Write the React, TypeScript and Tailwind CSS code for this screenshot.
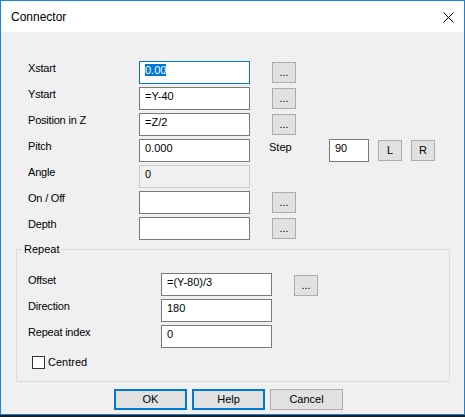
import React from "react";

const font = { fontFamily: '"Liberation Sans", Arial, sans-serif' };

function Field({
  value,
  w = "w-[111px]",
  focused = false,
  disabled = false,
}: {
  value?: string;
  w?: string;
  focused?: boolean;
  disabled?: boolean;
}) {
  const border = focused
    ? "border-[#0078d7]"
    : disabled
    ? "border-[#cccccc]"
    : "border-[#7a7a7a]";
  const bg = disabled ? "bg-[#f0f0f0]" : "bg-white";
  return (
    <div
      className={`${w} h-[23px] shrink-0 border ${border} ${bg} pl-[5px] pt-[2px] text-[11px] leading-[13px] text-black`}
    >
      {focused ? (
        <span className="bg-[#0078d7] text-white">{value}</span>
      ) : (
        value
      )}
    </div>
  );
}

function SmallBtn({ label, mt = "mt-[1px]" }: { label: string; mt?: string }) {
  return (
    <div
      className={`w-[24px] h-[21px] ${mt} shrink-0 border border-[#adadad] bg-[#e1e1e1] flex items-center justify-center text-[11px] leading-[13px] text-black`}
    >
      {label}
    </div>
  );
}

function Label({ text, w }: { text: string; w: string }) {
  return (
    <div className={`${w} shrink-0 pt-[1px] text-[11px] leading-[13px] tracking-[-0.2px] text-black`}>
      {text}
    </div>
  );
}

function Row({
  label,
  value,
  btn = true,
  focused,
  disabled,
}: {
  label: string;
  value?: string;
  btn?: boolean;
  focused?: boolean;
  disabled?: boolean;
}) {
  return (
    <div className="flex h-[23px]">
      <Label text={label} w="w-[111px]" />
      <Field value={value} focused={focused} disabled={disabled} />
      {btn && (
        <div className="ml-[22px]">
          <SmallBtn label="..." />
        </div>
      )}
    </div>
  );
}

function GroupRow({ label, value, btn }: { label: string; value: string; btn?: boolean }) {
  return (
    <div className="flex h-[23px]">
      <Label text={label} w="w-[133px]" />
      <Field value={value} />
      {btn && (
        <div className="ml-[22px]">
          <SmallBtn label="..." mt="mt-[2px]" />
        </div>
      )}
    </div>
  );
}

function DlgButton({ label, def }: { label: string; def?: boolean }) {
  return (
    <div
      className={`w-[73px] h-[21px] ${
        def ? "border-2 border-[#0078d7]" : "border border-[#adadad]"
      } bg-[#e1e1e1] flex items-center justify-center text-[11px] leading-[13px] text-black`}
    >
      {label}
    </div>
  );
}

export default function App() {
  return (
    <div className="w-[465px] h-[417px] bg-[#1c1c1c]" style={font}>
      <div className="w-[465px] h-[415px] border border-[#1883d7] bg-[#f0f0f0] flex flex-col">
        {/* Title bar */}
        <div className="h-[31px] bg-white flex items-center justify-between pl-[10px] pr-[10px] shrink-0">
          <span className="text-[12px] leading-[14px] text-black">Connector</span>
          <svg width="11" height="11" viewBox="0 0 11 11" className="mt-[1px]">
            <path d="M0.5 0.5 L10.5 10.5 M10.5 0.5 L0.5 10.5" stroke="#000" strokeWidth="1" />
          </svg>
        </div>

        {/* Content */}
        <div className="pt-[29px] flex flex-col">
          <div className="pl-[27px] flex flex-col gap-[3px]">
            <Row label="Xstart" value="0.00" focused />
            <Row label="Ystart" value="=Y-40" />
            <Row label="Position in Z" value="=Z/2" />
            <div className="flex h-[23px]">
              <Label text="Pitch" w="w-[111px]" />
              <Field value="0.000" />
              <div className="ml-[19px] w-[60px] pt-[2px] text-[11px] leading-[13px] text-black">Step</div>
              <Field value="90" w="w-[40px]" />
              <div className="ml-[9px]">
                <SmallBtn label="L" />
              </div>
              <div className="ml-[9px]">
                <SmallBtn label="R" />
              </div>
            </div>
            <Row label="Angle" value="0" btn={false} disabled />
            <Row label="On / Off" value="" />
            <Row label="Depth" value="" />
          </div>

          {/* Repeat group */}
          <div className="ml-[15px] mt-[9px] w-[434px] border border-[#dcdcdc] relative pt-[23px] pl-[11px] pb-[12px]">
            <span className="absolute top-[-7px] left-[5px] px-[2px] bg-[#f0f0f0] text-[11px] leading-[13px] text-black">
              Repeat
            </span>
            <div className="flex flex-col gap-[3px]">
              <GroupRow label="Offset" value="=(Y-80)/3" btn />
              <GroupRow label="Direction" value="180" />
              <GroupRow label="Repeat index" value="0" />
            </div>
            <div className="flex items-start mt-[8px] ml-[4px]">
              <div className="w-[13px] h-[13px] border border-[#333333] bg-white shrink-0" />
              <span className="ml-[3px] text-[11px] leading-[13px] text-black">Centred</span>
            </div>
          </div>

          {/* Buttons */}
          <div className="flex gap-[5px] pl-[113px] mt-[7px]">
            <DlgButton label="OK" def />
            <DlgButton label="Help" def />
            <DlgButton label="Cancel" />
          </div>
        </div>
      </div>
    </div>
  );
}
